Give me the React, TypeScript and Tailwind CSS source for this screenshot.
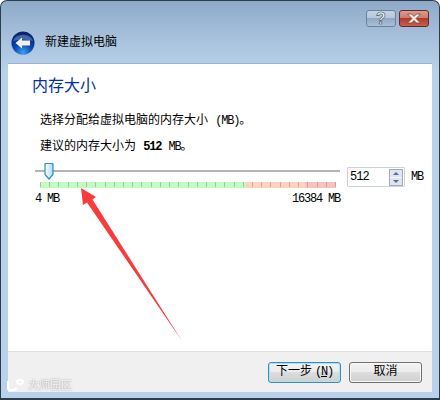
const FONT = "font-['Liberation_Mono','Noto_Sans_CJK_SC',monospace]";
const LATIN = "text-[12px] tracking-[-1.2px]";
const TICKS = Array.from({ length: 33 }, (_, i) => i);

function BackIcon() {
  return (
    <svg width="26" height="26" viewBox="0 0 26 26">
      <defs>
        <radialGradient id="back" cx="50%" cy="90%" r="80%">
          <stop offset="0%" stopColor="#3aa0f5" />
          <stop offset="50%" stopColor="#0a46b0" />
          <stop offset="100%" stopColor="#06256e" />
        </radialGradient>
      </defs>
      <circle cx="13" cy="13" r="12.5" fill="#a9c1dc" />
      <circle cx="13" cy="13" r="11.5" fill="url(#back)" />
      <path d="M3 11 A10.5 9 0 0 1 23 11 Q13 8 3 11Z" fill="#ffffff" opacity="0.25" />
      <path d="M5.5 13 L12 7.5 V10.5 H20 V15.5 H12 V18.5Z" fill="#f4f1e6" />
    </svg>
  );
}

function TitleButtons() {
  return (
    <div className="flex gap-[3px] justify-end pr-[10px]">
      <div className="w-[30px] h-[17px] rounded-[3px] border border-[#6f8199] bg-[linear-gradient(#c4d4e6_0%,#b4c7dc_48%,#92a9c4_50%,#a9c0d8_100%)] flex items-center justify-center text-[16px] leading-none font-bold text-white [-webkit-text-stroke:0.7px_#46566c] font-['Liberation_Sans',sans-serif]">
        ?
      </div>
      <div className="w-[30px] h-[17px] rounded-[3px] border border-[#5e2d28] bg-[linear-gradient(#dd9c90_0%,#d0786a_48%,#b23a2a_50%,#c9604e_100%)] flex items-center justify-center">
        <svg width="16" height="11" viewBox="0 0 16 11">
          <path d="M1.5 1 H5.5 L8 3.5 L10.5 1 H14.5 L10 5.5 L14.5 10 H10.5 L8 7.5 L5.5 10 H1.5 L6 5.5Z" fill="#f3ece8" stroke="#6b3a34" strokeWidth="0.7" />
        </svg>
      </div>
    </div>
  );
}

function Slider() {
  return (
    <div className="w-[312px]">
      <div className="relative h-[15px] flex items-center">
        <div className="w-[305px] h-[2px] bg-[#b4b4b4] mt-[-4px]" />
        <svg className="absolute left-[9px] top-[-2px]" width="10" height="17" viewBox="0 0 10 17">
          <defs>
            <linearGradient id="thumb" x1="0" x2="1">
              <stop offset="0%" stopColor="#ffffff" />
              <stop offset="100%" stopColor="#a6dcf0" />
            </linearGradient>
          </defs>
          <path d="M1 1.5 Q1 0.5 2 0.5 H8 Q9 0.5 9 1.5 V11.5 L5 16 L1 11.5Z" fill="url(#thumb)" stroke="#2b8fb3" strokeWidth="1.2" />
        </svg>
      </div>
      <div className="relative ml-[5px] w-[296px] h-[6px] mt-[2px] flex">
        <div className="w-[206px] bg-[#c2fcc2]" />
        <div className="w-[59px] bg-[#fdd3c0]" />
        <div className="w-[31px] bg-[#fdc0c0]" />
        <div className="absolute inset-x-0 top-0 h-[5px] flex justify-between">
          {TICKS.map((i) => (
            <div key={i} className="w-px h-full bg-[#8a8a70]/50" />
          ))}
        </div>
      </div>
      <div className={`flex justify-between w-[305px] mt-[5px] text-black leading-[12px] ${LATIN}`}>
        <span>4 MB</span>
        <span>16384 MB</span>
      </div>
    </div>
  );
}

function SpinBox() {
  return (
    <div className="flex items-center gap-[6px] mt-[2px]">
      <div className="w-[58px] h-[20px] border border-[#c9d3df] rounded-[1px] bg-white flex items-center justify-between pl-[2px] pr-px">
        <span className="text-black text-[12px] tracking-[-1px]">512</span>
        <div className="w-[14px] h-[17px] border border-[#a9a9b4] flex flex-col bg-[#dfe4ee]">
          <div className="flex-1 flex items-center justify-center border-b border-[#f4f6fa]">
            <div className="w-0 h-0 border-x-[3px] border-x-transparent border-b-[3px] border-b-[#5a6b9c]" />
          </div>
          <div className="flex-1 flex items-center justify-center">
            <div className="w-0 h-0 border-x-[3px] border-x-transparent border-t-[3px] border-t-[#5a6b9c]" />
          </div>
        </div>
      </div>
      <span className={`text-black ${LATIN}`}>MB</span>
    </div>
  );
}

function Arrow() {
  return (
    <svg className="absolute left-0 top-0 pointer-events-none" width="440" height="400" viewBox="0 0 440 400">
      <polygon points="81,188 96,197 92.5,199.5 182,341 87,202.5 83,205" fill="#f83b3b" />
    </svg>
  );
}

export default function App() {
  return (
    <div className={`relative w-[440px] h-[400px] bg-white text-[12px] ${FONT}`}>
      <div className="w-full h-full flex flex-col rounded-t-[7px] border border-[#2c3e4c] border-b-2 bg-[linear-gradient(#8faac9_0px,#a9c3de_40px,#b9d1ea_70px)]">
        <div className="h-[62px] shrink-0 pt-[9px]">
          <TitleButtons />
          <div className="flex items-center gap-[9px] pl-[9px] mt-[3px]">
            <BackIcon />
            <span className="text-black text-[12px] leading-none">新建虚拟电脑</span>
          </div>
        </div>
        <div className="flex-1 mx-[7px] mb-[6px] flex flex-col">
          <div className="flex-1 bg-white border-t border-[#9db2c9] pl-[24px] pt-[13px]">
            <h1 className="text-[16px] leading-[20px] text-[#003399]">内存大小</h1>
            <div className="pl-[8px] pt-[17px] text-black leading-[14px]">
              <p>
                选择分配给虚拟电脑的内存大小 <span className={LATIN}>(MB)</span>。
              </p>
              <p className="mt-[12px]">
                建议的内存大小为 <b className={LATIN}>512</b> <span className={LATIN}>MB</span>。
              </p>
            </div>
            <div className="flex items-start ml-[3px] mt-[11px]">
              <Slider />
              <SpinBox />
            </div>
          </div>
          <div className="h-[41px] shrink-0 bg-[#f0f0f0] border-t border-[#dfdfdf] flex items-center justify-end gap-[8px] pr-[10px] text-black">
            <button className="w-[73px] h-[21px] rounded-[3px] border border-[#3c8cb4] shadow-[inset_0_0_0_1px_#a8e4f8] bg-[linear-gradient(#f2f2f2_0%,#ebebeb_48%,#dddddd_50%,#cfcfcf_100%)] flex items-center justify-center">
              下一步 <span className={`${LATIN} ml-[3px]`}>(<u>N</u>)</span>
            </button>
            <button className="w-[73px] h-[21px] rounded-[3px] border border-[#707070] shadow-[inset_0_0_0_1px_#f8f8f8] bg-[linear-gradient(#f2f2f2_0%,#ebebeb_48%,#dddddd_50%,#cfcfcf_100%)] flex items-center justify-center">
              取消
            </button>
          </div>
        </div>
      </div>
      <Arrow />
      <div className="absolute left-[6px] bottom-[7px] flex items-center gap-[4px] text-[11px] leading-none text-white/80 [text-shadow:0_0_2px_#8a8a8a] blur-[0.4px]">
        <svg width="18" height="14" viewBox="0 0 18 14">
          <path d="M2 2 V10 Q6 13 11 9 M11 3 A3 2 0 1 1 17 3 A3 2 0 1 1 11 3" fill="none" stroke="#ffffff" strokeWidth="2" />
        </svg>
        <span>大师园区</span>
      </div>
    </div>
  );
}
